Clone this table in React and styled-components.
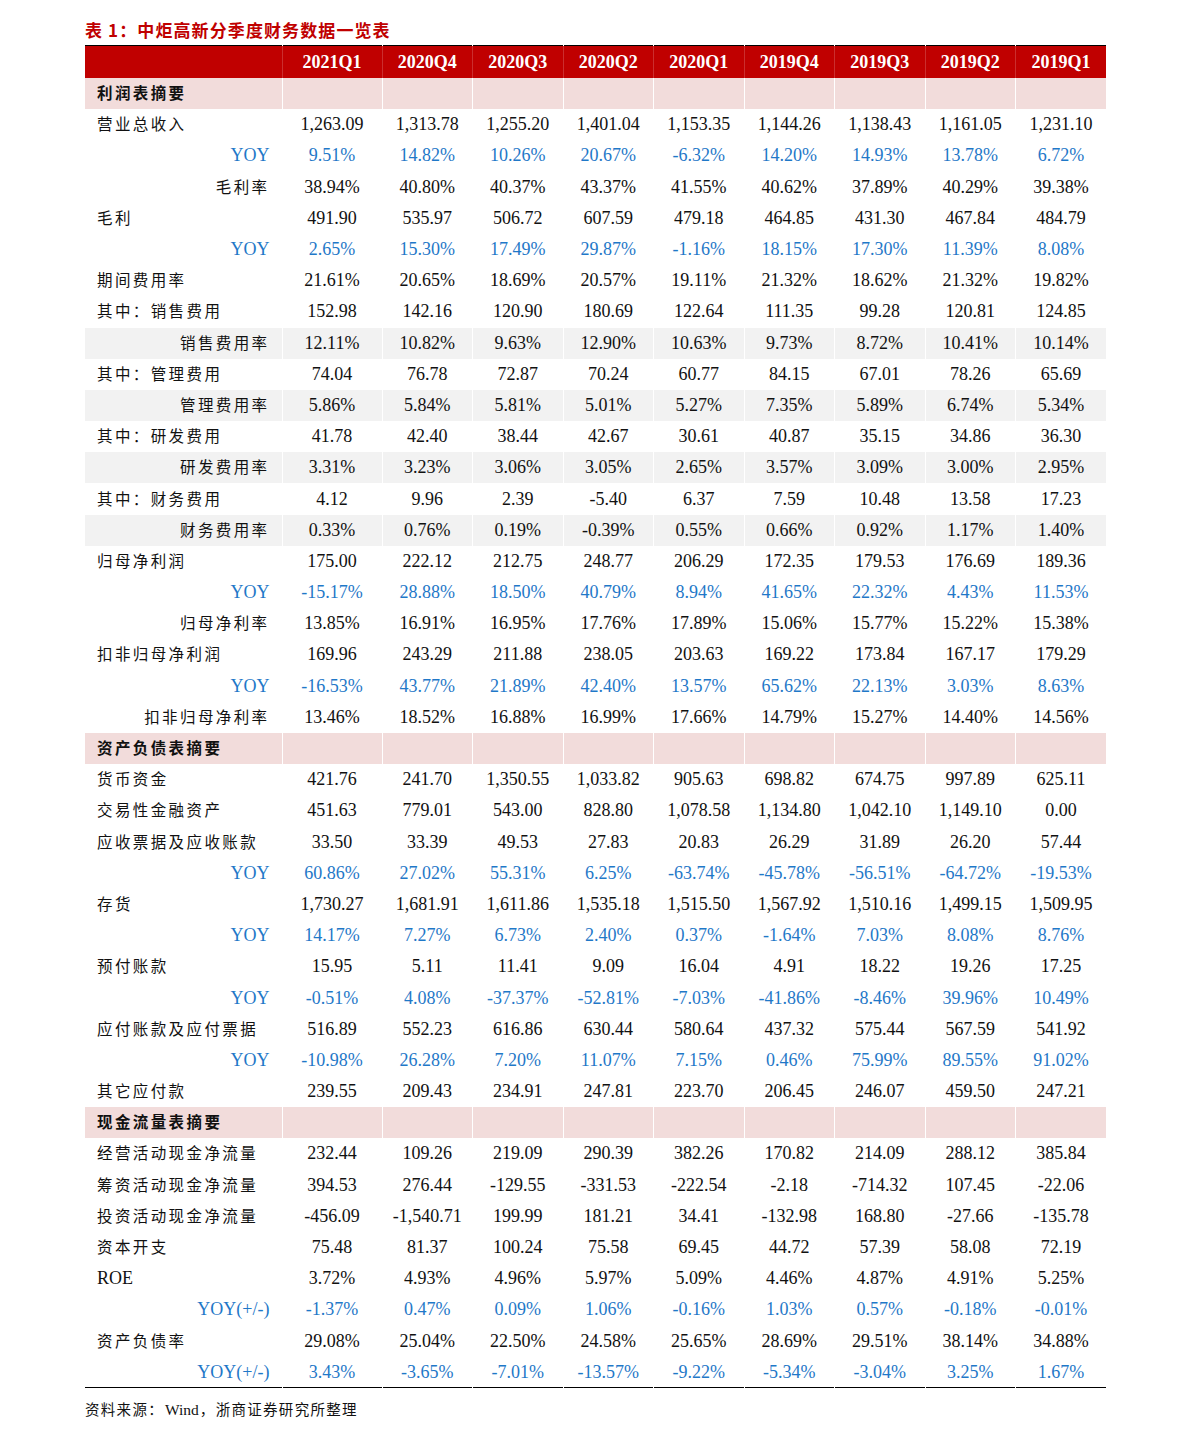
import React from 'react';
import styled, { createGlobalStyle } from 'styled-components';

const GlobalStyle = createGlobalStyle`
  body {
    margin: 0;
    background: #fff;
  }
`

const Page = styled.div`
  width: 1191px;
  padding: 18px 0 0 85px;
  box-sizing: border-box;
`

const Title = styled.div`
  font-family: "Noto Sans CJK SC", sans-serif;
  font-weight: 700;
  font-size: 17px;
  color: #c00000;
  line-height: 24px;
  height: 27px;
  letter-spacing: 1.1px;
`

const Table = styled.table`
  width: 1021px;
  border-collapse: collapse;
  table-layout: fixed;
  border-top: 1px solid #000;
  border-bottom: 1.5px solid #000;
`

const HeadCell = styled.th`
  background: #c00000;
  color: #fff;
  font-family: "Liberation Serif", serif;
  font-weight: 700;
  font-size: 18px;
  height: 32px;
  padding: 0;
  text-align: center;
  border-left: 1px solid rgba(255, 255, 255, 0.18);
  &:first-child {
    border-left: none;
  }
`

const Row = styled.tr`
  height: 31.19px;
  background: ${p => (p.$kind === 'section' ? '#f2dcdb' : p.$kind === 'shade' ? '#f2f2f2' : '#fff')};
`

const Label = styled.td`
  padding: 0 ${p => (p.$right ? '12px' : '0')} ${p => (p.$latin ? '0' : '3px')} ${p => (p.$right ? '0' : '12px')};
  text-align: ${p => (p.$right ? 'right' : 'left')};
  font-family: ${p => (p.$latin ? '"Liberation Serif", serif' : '"Noto Sans CJK SC", sans-serif')};
  font-size: ${p => (p.$latin ? '18px' : '15.5px')};
  font-weight: ${p => (p.$bold ? 700 : 400)};
  letter-spacing: ${p => (p.$latin ? '0' : '2.4px')};
  color: ${p => (p.$blue ? '#1f78c8' : '#111')};
  white-space: nowrap;
`

const Cell = styled.td`
  padding: 0;
  text-align: center;
  font-family: "Liberation Serif", serif;
  font-size: 18px;
  color: ${p => (p.$blue ? '#1f78c8' : '#111')};
  border-left: 1px solid #fff;
  white-space: nowrap;
`

const Source = styled.div`
  margin-top: 10px;
  font-family: "Noto Sans CJK SC", sans-serif;
  font-size: 14.5px;
  font-weight: 400;
  color: #111;
  letter-spacing: 1.3px;
  span {
    font-family: "Liberation Serif", serif;
    font-size: 15.5px;
    letter-spacing: 0;
    margin: 0 1px;
  }
`

const quarters = ['2021Q1', '2020Q4', '2020Q3', '2020Q2', '2020Q1', '2019Q4', '2019Q3', '2019Q2', '2019Q1'];

// kind: section | main | sub | shade | yoy
const rows = [
  ['section', '利润表摘要'],
  ['main', '营业总收入', '1,263.09 1,313.78 1,255.20 1,401.04 1,153.35 1,144.26 1,138.43 1,161.05 1,231.10'],
  ['yoy', 'YOY', '9.51% 14.82% 10.26% 20.67% -6.32% 14.20% 14.93% 13.78% 6.72%'],
  ['sub', '毛利率', '38.94% 40.80% 40.37% 43.37% 41.55% 40.62% 37.89% 40.29% 39.38%'],
  ['main', '毛利', '491.90 535.97 506.72 607.59 479.18 464.85 431.30 467.84 484.79'],
  ['yoy', 'YOY', '2.65% 15.30% 17.49% 29.87% -1.16% 18.15% 17.30% 11.39% 8.08%'],
  ['main', '期间费用率', '21.61% 20.65% 18.69% 20.57% 19.11% 21.32% 18.62% 21.32% 19.82%'],
  ['main', '其中：销售费用', '152.98 142.16 120.90 180.69 122.64 111.35 99.28 120.81 124.85'],
  ['shade', '销售费用率', '12.11% 10.82% 9.63% 12.90% 10.63% 9.73% 8.72% 10.41% 10.14%'],
  ['main', '其中：管理费用', '74.04 76.78 72.87 70.24 60.77 84.15 67.01 78.26 65.69'],
  ['shade', '管理费用率', '5.86% 5.84% 5.81% 5.01% 5.27% 7.35% 5.89% 6.74% 5.34%'],
  ['main', '其中：研发费用', '41.78 42.40 38.44 42.67 30.61 40.87 35.15 34.86 36.30'],
  ['shade', '研发费用率', '3.31% 3.23% 3.06% 3.05% 2.65% 3.57% 3.09% 3.00% 2.95%'],
  ['main', '其中：财务费用', '4.12 9.96 2.39 -5.40 6.37 7.59 10.48 13.58 17.23'],
  ['shade', '财务费用率', '0.33% 0.76% 0.19% -0.39% 0.55% 0.66% 0.92% 1.17% 1.40%'],
  ['main', '归母净利润', '175.00 222.12 212.75 248.77 206.29 172.35 179.53 176.69 189.36'],
  ['yoy', 'YOY', '-15.17% 28.88% 18.50% 40.79% 8.94% 41.65% 22.32% 4.43% 11.53%'],
  ['sub', '归母净利率', '13.85% 16.91% 16.95% 17.76% 17.89% 15.06% 15.77% 15.22% 15.38%'],
  ['main', '扣非归母净利润', '169.96 243.29 211.88 238.05 203.63 169.22 173.84 167.17 179.29'],
  ['yoy', 'YOY', '-16.53% 43.77% 21.89% 42.40% 13.57% 65.62% 22.13% 3.03% 8.63%'],
  ['sub', '扣非归母净利率', '13.46% 18.52% 16.88% 16.99% 17.66% 14.79% 15.27% 14.40% 14.56%'],
  ['section', '资产负债表摘要'],
  ['main', '货币资金', '421.76 241.70 1,350.55 1,033.82 905.63 698.82 674.75 997.89 625.11'],
  ['main', '交易性金融资产', '451.63 779.01 543.00 828.80 1,078.58 1,134.80 1,042.10 1,149.10 0.00'],
  ['main', '应收票据及应收账款', '33.50 33.39 49.53 27.83 20.83 26.29 31.89 26.20 57.44'],
  ['yoy', 'YOY', '60.86% 27.02% 55.31% 6.25% -63.74% -45.78% -56.51% -64.72% -19.53%'],
  ['main', '存货', '1,730.27 1,681.91 1,611.86 1,535.18 1,515.50 1,567.92 1,510.16 1,499.15 1,509.95'],
  ['yoy', 'YOY', '14.17% 7.27% 6.73% 2.40% 0.37% -1.64% 7.03% 8.08% 8.76%'],
  ['main', '预付账款', '15.95 5.11 11.41 9.09 16.04 4.91 18.22 19.26 17.25'],
  ['yoy', 'YOY', '-0.51% 4.08% -37.37% -52.81% -7.03% -41.86% -8.46% 39.96% 10.49%'],
  ['main', '应付账款及应付票据', '516.89 552.23 616.86 630.44 580.64 437.32 575.44 567.59 541.92'],
  ['yoy', 'YOY', '-10.98% 26.28% 7.20% 11.07% 7.15% 0.46% 75.99% 89.55% 91.02%'],
  ['main', '其它应付款', '239.55 209.43 234.91 247.81 223.70 206.45 246.07 459.50 247.21'],
  ['section', '现金流量表摘要'],
  ['main', '经营活动现金净流量', '232.44 109.26 219.09 290.39 382.26 170.82 214.09 288.12 385.84'],
  ['main', '筹资活动现金净流量', '394.53 276.44 -129.55 -331.53 -222.54 -2.18 -714.32 107.45 -22.06'],
  ['main', '投资活动现金净流量', '-456.09 -1,540.71 199.99 181.21 34.41 -132.98 168.80 -27.66 -135.78'],
  ['main', '资本开支', '75.48 81.37 100.24 75.58 69.45 44.72 57.39 58.08 72.19'],
  ['main', 'ROE', '3.72% 4.93% 4.96% 5.97% 5.09% 4.46% 4.87% 4.91% 5.25%'],
  ['yoy', 'YOY(+/-)', '-1.37% 0.47% 0.09% 1.06% -0.16% 1.03% 0.57% -0.18% -0.01%'],
  ['main', '资产负债率', '29.08% 25.04% 22.50% 24.58% 25.65% 28.69% 29.51% 38.14% 34.88%'],
  ['yoy', 'YOY(+/-)', '3.43% -3.65% -7.01% -13.57% -9.22% -5.34% -3.04% 3.25% 1.67%'],
];

const isLatin = s => /^[A-Za-z(+/\-)]+$/.test(s);

export default function App() {
  return (
    <Page>
      <GlobalStyle />
      <Title>表 1：中炬高新分季度财务数据一览表</Title>
      <Table>
        <colgroup>
          <col style={{ width: 197 }} />
          <col style={{ width: 100 }} />
          {quarters.slice(1).map(q => <col key={q} />)}
        </colgroup>
        <thead>
          <tr>
            <HeadCell />
            {quarters.map(q => <HeadCell key={q}>{q}</HeadCell>)}
          </tr>
        </thead>
        <tbody>
          {rows.map(([kind, label, values], i) => {
            const right = kind === 'sub' || kind === 'shade' || kind === 'yoy';
            const blue = kind === 'yoy';
            return (
              <Row key={i} $kind={kind}>
                <Label $right={right} $blue={blue} $bold={kind === 'section'} $latin={isLatin(label)}>
                  {label}
                </Label>
                {quarters.map((q, j) => (
                  <Cell key={q} $blue={blue}>{values ? values.split(' ')[j] : ''}</Cell>
                ))}
              </Row>
            );
          })}
        </tbody>
      </Table>
      <Source>资料来源：<span>Wind</span>，浙商证券研究所整理</Source>
    </Page>
  );
}
